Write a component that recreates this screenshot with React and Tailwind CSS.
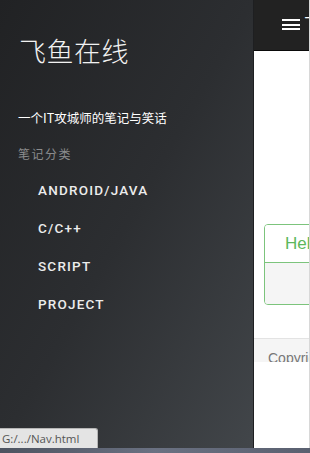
export default function App() {
  const items = ["ANDROID/JAVA", "C/C++", "SCRIPT", "PROJECT"];
  return (
    <div className="relative w-[310px] h-[453px] overflow-hidden flex flex-col bg-white">
      <div className="flex flex-1 min-h-0">
        <aside className="w-[254px] shrink-0 border-r border-[#1e1f21] bg-gradient-to-br from-[#212224] via-[#2c2e31] to-[#42464a] pl-[19px] flex flex-col" style={{ fontFamily: '"Noto Sans CJK SC", "Noto Sans", sans-serif' }}>
          <h1 className="mt-[36px] text-[27px] leading-[30px] font-light text-[#f2f2f2] tracking-[0.5px]">飞鱼在线</h1>
          <p className="mt-[44px] text-[12.5px] leading-[16px] text-white -ml-[1px]">一个IT攻城师的笔记与笑话</p>
          <p className="mt-[20px] text-[12px] leading-[16px] text-[#8a8b8d] tracking-[1.5px] -ml-[1px]">笔记分类</p>
          <ul className="mt-[9px] pl-[19px]" style={{ fontFamily: 'Roboto, "Liberation Sans", sans-serif' }}>
            {items.map((t) => (
              <li key={t} className="h-[38px] flex items-center text-[13.5px] font-medium tracking-[1.2px] text-[#ececec]">{t}</li>
            ))}
          </ul>
        </aside>
        <main className="flex-1 min-w-0 overflow-hidden flex flex-col border-r border-[#d8d8d8]" style={{ fontFamily: '"Liberation Sans", Arial, sans-serif' }}>
          <div className="h-[51px] shrink-0 bg-[#222222] border-b border-[#0a0a0a] flex items-start relative">
            <div className="ml-[28px] mt-[19px] flex flex-col gap-[2.5px]">
              <span className="block w-[18px] h-[2px] bg-white"></span>
              <span className="block w-[18px] h-[2px] bg-white"></span>
              <span className="block w-[18px] h-[2px] bg-white"></span>
            </div>
            <span className="ml-[4px] mt-[13px] text-[16px] leading-[20px] text-white whitespace-nowrap" style={{ fontFamily: '"Noto Sans CJK SC", sans-serif' }}>飞鱼在线</span>
          </div>
          <div className="ml-[10px] mt-[173px] w-[240px] shrink-0 border border-[#7cc47c] rounded-[4px] overflow-hidden">
            <div className="h-[38px] bg-white border-b border-[#7cc47c] flex items-center pl-[20px] text-[17px] text-[#5cb85c] whitespace-nowrap">Hello World</div>
            <div className="h-[41px] bg-[#f5f5f5]"></div>
          </div>
          <div className="mt-[33px] h-[24px] shrink-0 border-t border-[#e3e3e3] bg-[#f5f5f5] overflow-hidden">
            <p className="pl-[14px] pt-[11px] text-[14px] leading-[16px] text-[#777] whitespace-nowrap">Copyright © 2015</p>
          </div>
          <div className="flex-1 bg-white"></div>
        </main>
      </div>
      <div className="h-[5px] shrink-0 bg-gradient-to-r from-[#4d5360] via-[#6a7182] to-[#5a6070]"></div>
      <div className="absolute left-0 bottom-[5px] w-[98px] h-[20px] bg-[#e4e4e4] border-t border-r border-[#b5b5b5] rounded-tr-[3px] flex items-center pl-[2px] text-[11.5px] text-[#555] whitespace-nowrap" style={{ fontFamily: '"Open Sans", "Noto Sans", sans-serif' }}>G:/.../Nav.html</div>
    </div>
  );
}
